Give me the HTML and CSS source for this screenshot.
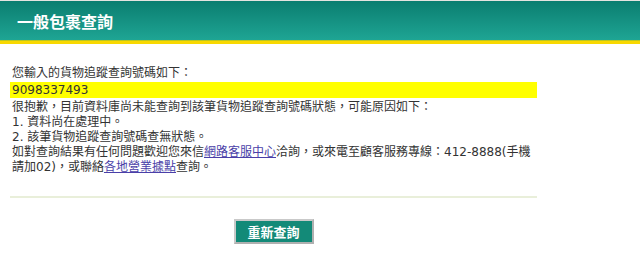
FILE: index.html
```html
<!DOCTYPE html>
<html lang="zh-Hant">
<head>
<meta charset="utf-8">
<title>一般包裹查詢</title>
<link rel="stylesheet" href="styles.css">
</head>
<body>
<div class="header"><h1 class="title">一般包裹查詢</h1></div>
<div class="content">
  <p class="intro">您輸入的貨物追蹤查詢號碼如下：</p>
  <div class="number">9098337493</div>
  <p class="message">很抱歉，目前資料庫尚未能查詢到該筆貨物追蹤查詢號碼狀態，可能原因如下：<br>
  1. 資料尚在處理中。<br>
  2. 該筆貨物追蹤查詢號碼查無狀態。<br>
  如對查詢結果有任何問題歡迎您來信<a href="#">網路客服中心</a>洽詢，或來電至顧客服務專線：412-8888(手機<br>請加02)，或聯絡<a href="#">各地營業據點</a>查詢。</p>
  <hr class="divider">
  <div class="actions"><button class="btn" type="button">重新查詢</button></div>
</div>
</body>
</html>
```
FILE: styles.css
```css
html, body {
  margin: 0;
  padding: 0;
  background: #ffffff;
}
body {
  font-family: "DejaVu Sans", "Noto Sans CJK TC", sans-serif;
  font-size: 12px;
  color: #333333;
}
.header {
  border-top: 1px solid #e4e4e0;
  height: 39px;
  background: linear-gradient(to bottom, #0a7e70 0%, #148f80 45%, #1ea594 100%);
  border-bottom: 1px solid #b9c620;
  box-shadow: 0 3px 0 #f8d800;
  display: flex;
  align-items: center;
  padding-left: 17px;
}
.title {
  margin: 0;
  font-family: "Noto Sans CJK TC", sans-serif;
  font-size: 16px;
  font-weight: bold;
  color: #ffffff;
  letter-spacing: 0;
}
.content {
  width: 527px;
  margin-left: 10px;
  padding-top: 25px;
}
.intro {
  margin: 0 0 1px 2px;
  line-height: 15px;
}
.number {
  background: #ffff00;
  height: 16px;
  line-height: 16px;
  padding-left: 2px;
}
.message {
  margin: 2px 0 0 2px;
  line-height: 15px;
}
.message a {
  color: #4a3fa8;
  text-decoration: underline;
}
.divider {
  border: 0;
  height: 2px;
  background: #e9efda;
  margin: 21px 0 0 0;
}
.actions {
  display: flex;
  justify-content: center;
  padding-top: 21px;
}
.btn {
  width: 80px;
  height: 25px;
  background: #138a78;
  border: 2px solid #c9c9c9;
  border-right-color: #b0b0b0;
  border-bottom-color: #b0b0b0;
  color: #ffffff;
  font-family: "Noto Sans CJK TC", sans-serif;
  font-size: 13px;
  font-weight: bold;
  padding: 0;
  line-height: 19px;
}
```
